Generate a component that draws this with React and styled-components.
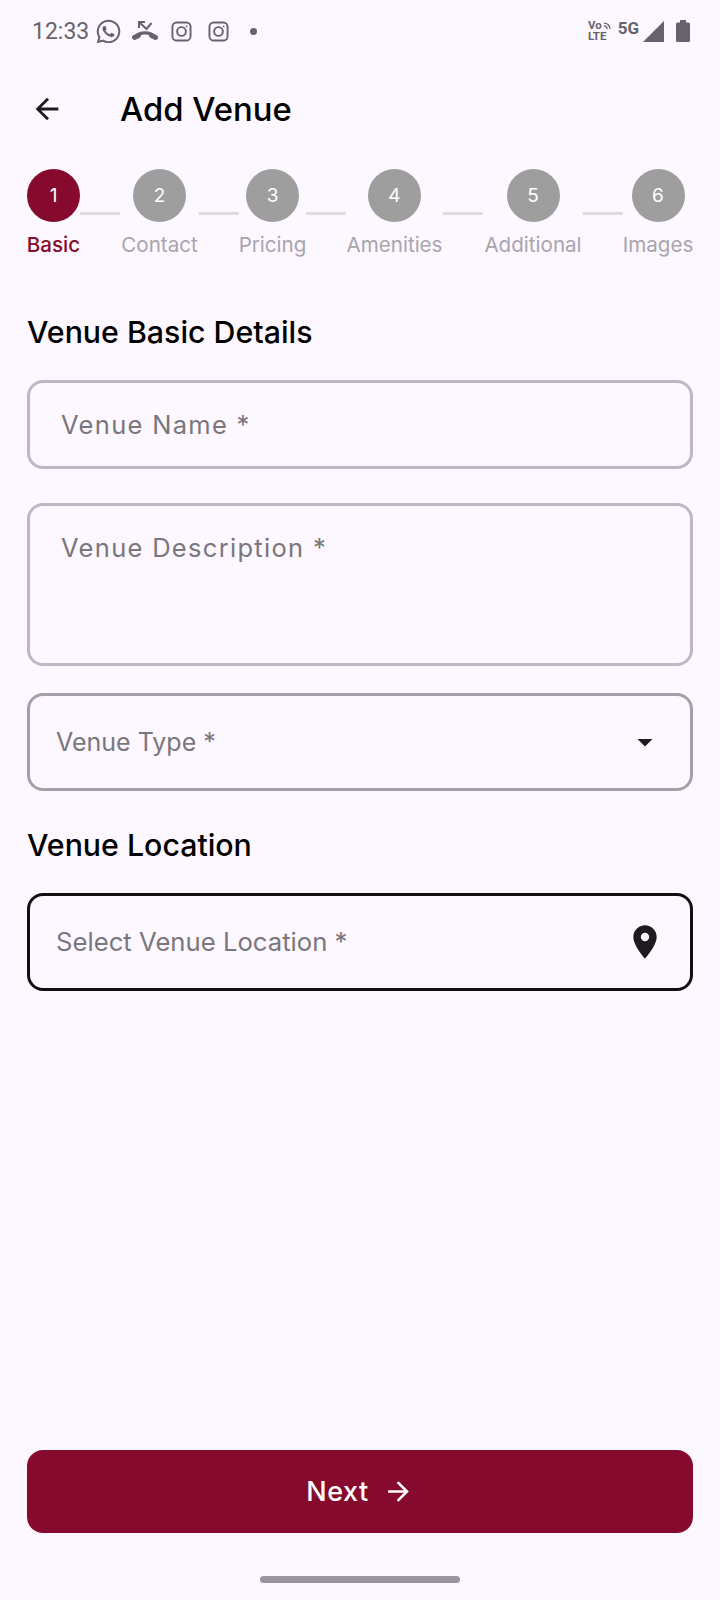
import styled, { createGlobalStyle } from "styled-components"
import { FaWhatsapp } from "react-icons/fa"
import { MdArrowBack, MdArrowDropDown, MdArrowForward, MdLocationOn } from "react-icons/md"

const GlobalStyle = createGlobalStyle`
  html, body { margin: 0; padding: 0; background: #fdf7ff; }
  * { box-sizing: border-box; }
  body { font-family: Inter, "Liberation Sans", sans-serif; }
`

const steps = [
  { num: 1, label: "Basic", width: 53 },
  { num: 2, label: "Contact", width: 79 },
  { num: 3, label: "Pricing", width: 67 },
  { num: 4, label: "Amenities", width: 97 },
  { num: 5, label: "Additional", width: 100 },
  { num: 6, label: "Images", width: 70 },
]

function InstaIcon() {
  return (
    <InstaSvg width="21" height="21" viewBox="0 0 22 22" fill="none" stroke="#67636b" strokeWidth="2">
      <rect x="1.5" y="1.5" width="19" height="19" rx="4.5" />
      <circle cx="11" cy="11" r="4.6" />
      <circle cx="16.4" cy="5.6" r="1" fill="#67636b" stroke="none" />
    </InstaSvg>
  )
}

function MissedCallIcon() {
  return (
    <MissedSvg width="26" height="22" viewBox="0 0 26 22" fill="none" stroke="#67636b" strokeWidth="2">
      <path d="M13 2 H7 V8" />
      <path d="M7 2 L14.5 9 L19.5 3" />
      <path d="M3.5 17 C7 11.5 19 11.5 22.5 17" strokeWidth="3.4" />
      <path d="M2.5 17.5 L6.5 15.5" strokeWidth="5" strokeLinecap="round" />
      <path d="M23.5 17.5 L19.5 15.5" strokeWidth="5" strokeLinecap="round" />
    </MissedSvg>
  )
}

export default function App() {
  return (
    <Page>
      <GlobalStyle />
      <StatusBar>
        <StatusLeft>
          <Time>12:33</Time>
          <WhatsappIcon size={27} />
          <MissedCallIcon />
          <InstaIcon />
          <InstaIcon />
          <Dot />
        </StatusLeft>
        <StatusRight>
          <Volte>
            <VoRow>
              Vo
              <svg width="8" height="8" viewBox="0 0 9 9" fill="none" stroke="#67636b" strokeWidth="1.5">
                <path d="M1 1.2 C5 1.2 7.8 4 7.8 8" />
                <path d="M1 4.4 C3.2 4.4 4.6 5.8 4.6 8" />
              </svg>
            </VoRow>
            <span>LTE</span>
          </Volte>
          <FiveG>5G</FiveG>
          <svg width="21" height="21" viewBox="0 0 21 21">
            <path d="M21 0 V21 H0 Z" fill="#67636b" />
          </svg>
          <BatterySvg width="14" height="22" viewBox="0 0 14 22">
            <path d="M4 0 H10 V2.5 H12.5 Q14 2.5 14 4 V20.5 Q14 22 12.5 22 H1.5 Q0 22 0 20.5 V4 Q0 2.5 1.5 2.5 H4 Z" fill="#67636b" />
          </BatterySvg>
        </StatusRight>
      </StatusBar>

      <AppBar>
        <BackIcon><MdArrowBack size={34} /></BackIcon>
        <Title>Add Venue</Title>
      </AppBar>

      <Stepper>
        {steps.map((s, i) => (
          <StepGroup key={s.num}>
            <Step $width={s.width}>
              <Circle $active={i === 0}>{s.num}</Circle>
              <StepLabel $active={i === 0}>{s.label}</StepLabel>
            </Step>
            {i < steps.length - 1 && <Connector />}
          </StepGroup>
        ))}
      </Stepper>

      <Form>
        <Heading>Venue Basic Details</Heading>
        <Field $height={89} $color="#bdb9c1" $left={31}>
          <Hint $spaced>Venue Name *</Hint>
        </Field>
        <Field $height={163} $color="#bdb9c1" $top={27} $left={31} $mt={34} $start>
          <Hint $spaced>Venue Description *</Hint>
        </Field>
        <Field $height={98} $color="#a3a0a7" $left={26} $mt={27} $between>
          <Hint $size={25}>Venue Type *</Hint>
          <FieldIcon><MdArrowDropDown size={36} /></FieldIcon>
        </Field>
        <Heading $mt={37}>Venue Location</Heading>
        <Field $height={98} $color="#111" $left={26} $between>
          <Hint $size={25.7}>Select Venue Location *</Hint>
          <FieldIcon><MdLocationOn size={40} /></FieldIcon>
        </Field>
      </Form>

      <Footer>
        <NextButton>
          Next
          <MdArrowForward size={31} />
        </NextButton>
        <HomeBar />
      </Footer>
    </Page>
  )
}

const Page = styled.div`
  width: 720px;
  height: 1600px;
  background: #fdf7ff;
  display: flex;
  flex-direction: column;
  overflow: hidden;
`

const StatusBar = styled.div`
  height: 62px;
  padding: 0 30px 0 32px;
  display: flex;
  align-items: center;
  justify-content: space-between;
  color: #67636b;
`

const StatusLeft = styled.div`
  display: flex;
  align-items: center;
  gap: 13px;
`

const Time = styled.span`
  font-family: Roboto, sans-serif;
  font-size: 23px;
  margin-right: -7px;
`

const WhatsappIcon = styled(FaWhatsapp)`
  margin-right: -3px;
`

const MissedSvg = styled.svg`
  display: block;
`

const InstaSvg = styled.svg`
  display: block;
  margin-right: 3px;
`

const Dot = styled.span`
  width: 7px;
  height: 7px;
  border-radius: 50%;
  background: #67636b;
  margin-left: 5px;
`

const StatusRight = styled.div`
  display: flex;
  align-items: center;
`

const Volte = styled.div`
  display: flex;
  flex-direction: column;
  font-family: Roboto, sans-serif;
  font-size: 11.5px;
  font-weight: 700;
  line-height: 11px;
  margin-right: 7px;
`

const VoRow = styled.div`
  display: flex;
  align-items: center;
  gap: 1px;
`

const FiveG = styled.span`
  font-family: Roboto, sans-serif;
  font-size: 17px;
  font-weight: 700;
  margin-bottom: 6px;
  margin-right: 4px;
`

const BatterySvg = styled.svg`
  display: block;
  margin-left: 12px;
`

const AppBar = styled.div`
  height: 86px;
  padding: 8px 0 0 30px;
  display: flex;
  align-items: center;
`

const BackIcon = styled.span`
  display: flex;
  color: #1d1b20;
`

const Title = styled.h1`
  margin: 0 0 0 56px;
  font-size: 32.8px;
  font-weight: 500;
  color: #000;
`

const Stepper = styled.div`
  margin-top: 21px;
  padding-left: 27px;
  display: flex;
  align-items: flex-start;
`

const StepGroup = styled.div`
  display: flex;
  align-items: flex-start;
`

const Step = styled.div`
  width: ${(p) => p.$width}px;
  display: flex;
  flex-direction: column;
  align-items: center;
`

const Circle = styled.div`
  width: 53px;
  height: 53px;
  border-radius: 50%;
  background: ${(p) => (p.$active ? "#850a2d" : "#9e9e9e")};
  color: #fff;
  font-size: 19px;
  display: flex;
  align-items: center;
  justify-content: center;
`

const StepLabel = styled.span`
  margin-top: 11px;
  font-size: 20.6px;
  line-height: 24px;
  white-space: nowrap;
  font-weight: ${(p) => (p.$active ? 500 : 400)};
  color: ${(p) => (p.$active ? "#850a2d" : "#a8a5ac")};
`

const Connector = styled.div`
  width: 40px;
  height: 3px;
  margin-top: 43px;
  background: #dfdbe1;
`

const Form = styled.div`
  padding: 0 27px;
  display: flex;
  flex-direction: column;
`

const Heading = styled.h2`
  margin: ${(p) => p.$mt || 58}px 0 31px;
  font-size: 30.3px;
  line-height: 34px;
  font-weight: 500;
  color: #000;
`

const Field = styled.div`
  height: ${(p) => p.$height}px;
  margin-top: ${(p) => p.$mt || 0}px;
  padding: ${(p) => p.$top || 0}px 25px 0 ${(p) => p.$left}px;
  border: 3px solid ${(p) => p.$color};
  border-radius: 16px;
  display: flex;
  align-items: ${(p) => (p.$start ? "flex-start" : "center")};
  justify-content: ${(p) => (p.$between ? "space-between" : "flex-start")};
`

const Hint = styled.span`
  font-size: ${(p) => p.$size || 25.5}px;
  line-height: 30px;
  letter-spacing: ${(p) => (p.$spaced ? "1.3px" : "0")};
  color: #79767c;
`

const FieldIcon = styled.span`
  width: 40px;
  display: flex;
  justify-content: center;
  color: #1d1b20;
`

const Footer = styled.div`
  margin-top: auto;
  padding: 0 27px;
  display: flex;
  flex-direction: column;
  align-items: center;
`

const NextButton = styled.div`
  width: 100%;
  height: 83px;
  background: #850a2d;
  border-radius: 16px;
  color: #fff;
  font-size: 27px;
  font-weight: 500;
  letter-spacing: 0.5px;
  display: flex;
  align-items: center;
  justify-content: center;
  gap: 14px;
`

const HomeBar = styled.div`
  width: 200px;
  height: 7px;
  margin: 43px 0 17px;
  border-radius: 4px;
  background: #99959c;
`
